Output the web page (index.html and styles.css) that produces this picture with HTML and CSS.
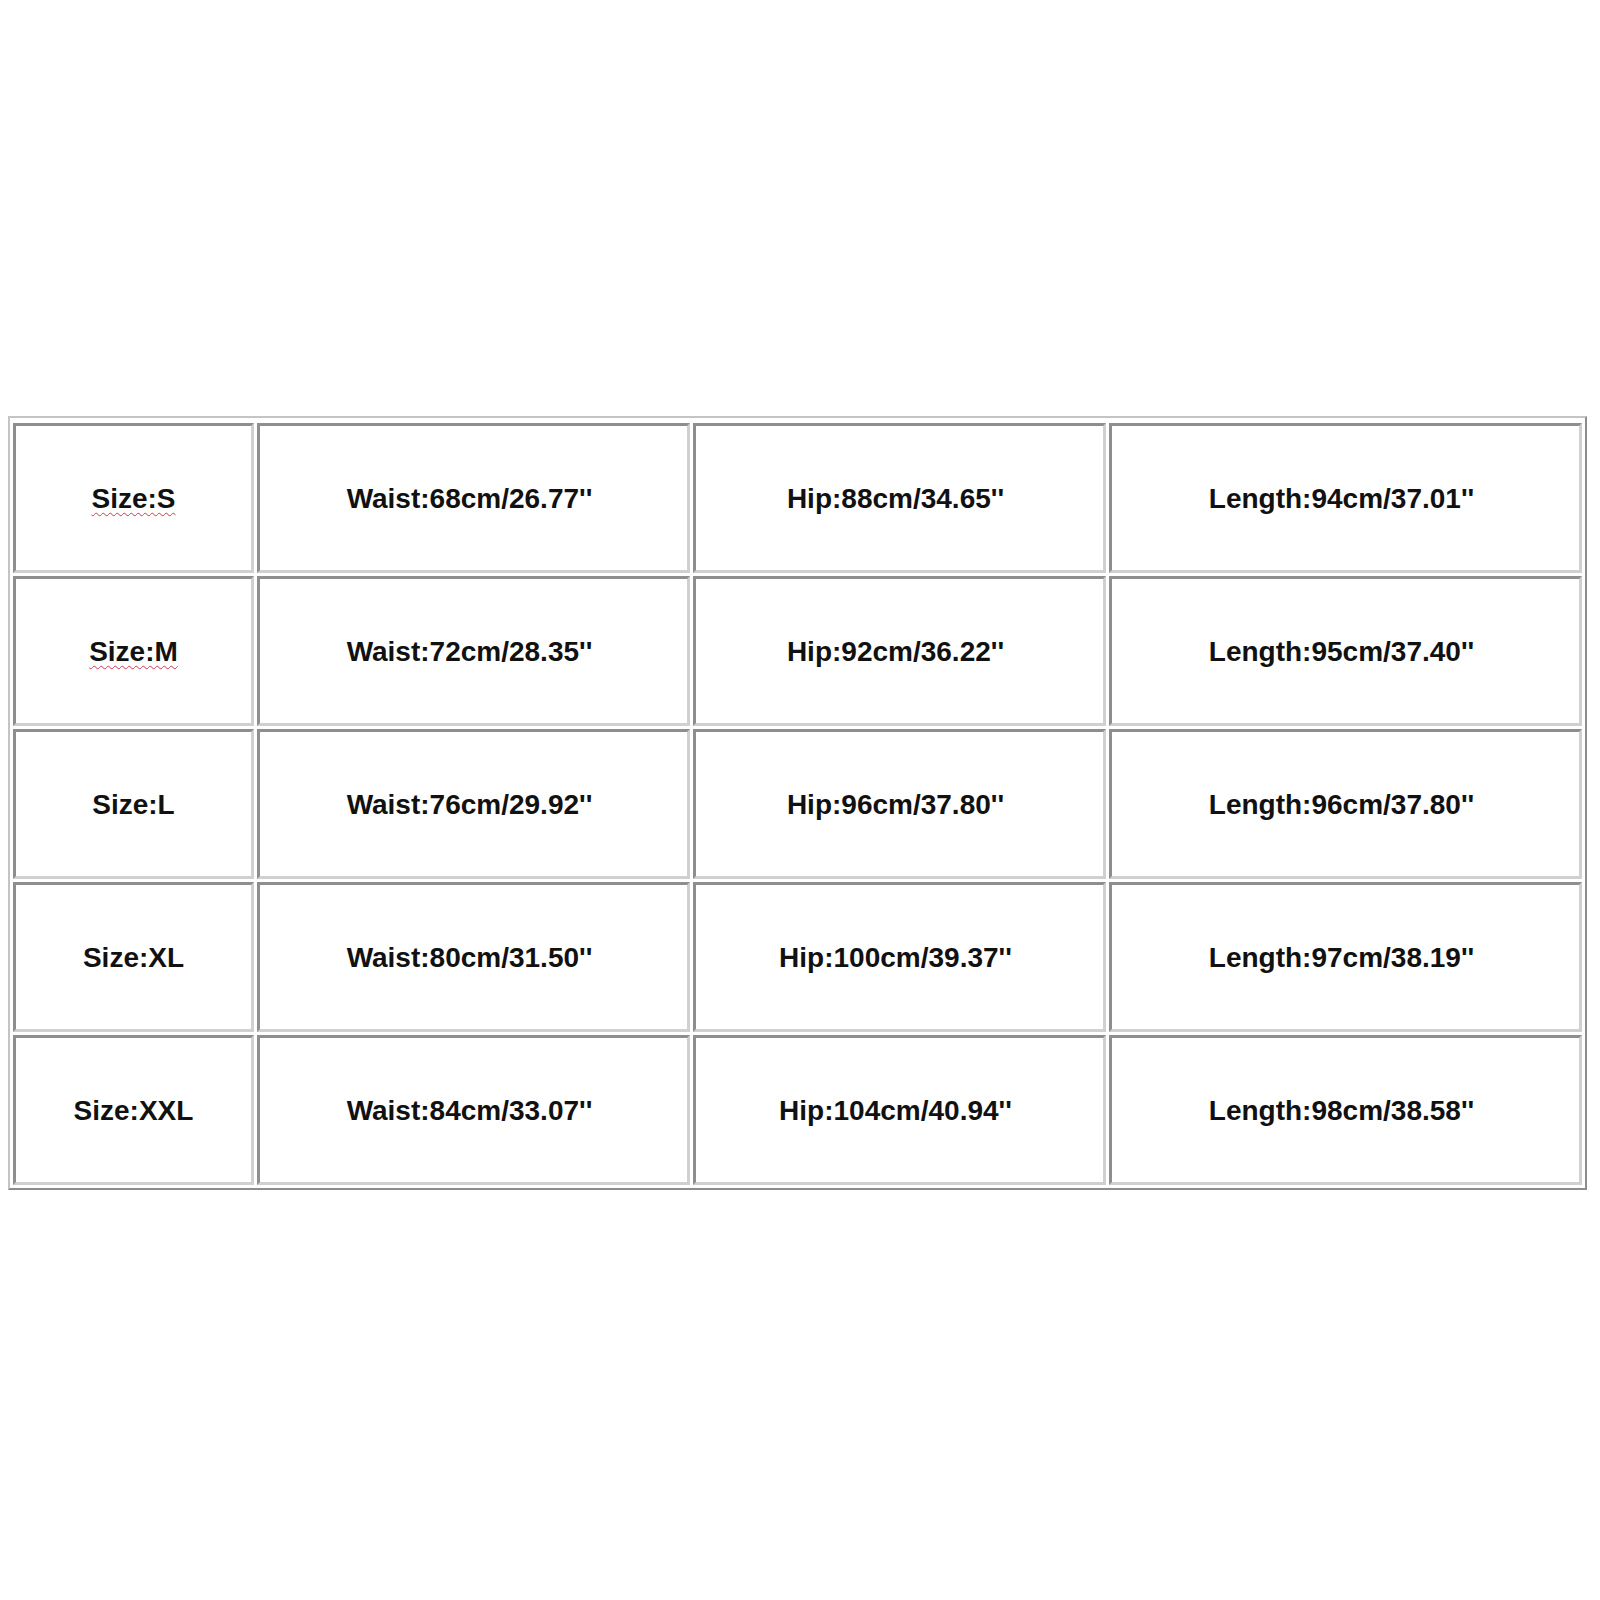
FILE: index.html
```html
<!DOCTYPE html>
<html>
<head>
<meta charset="utf-8">
<link rel="stylesheet" href="styles.css">
</head>
<body>
<div class="page">
  <table class="sizes">
    <colgroup>
      <col class="c1"><col class="c2"><col class="c3"><col class="c4">
    </colgroup>
    <tr>
      <td><span class="spell">Size:S</span></td>
      <td class="val">Waist:68cm/26.77''</td>
      <td class="val">Hip:88cm/34.65''</td>
      <td class="val">Length:94cm/37.01''</td>
    </tr>
    <tr>
      <td><span class="spell">Size:M</span></td>
      <td class="val">Waist:72cm/28.35''</td>
      <td class="val">Hip:92cm/36.22''</td>
      <td class="val">Length:95cm/37.40''</td>
    </tr>
    <tr>
      <td>Size:L</td>
      <td class="val">Waist:76cm/29.92''</td>
      <td class="val">Hip:96cm/37.80''</td>
      <td class="val">Length:96cm/37.80''</td>
    </tr>
    <tr>
      <td>Size:XL</td>
      <td class="val">Waist:80cm/31.50''</td>
      <td class="val">Hip:100cm/39.37''</td>
      <td class="val">Length:97cm/38.19''</td>
    </tr>
    <tr>
      <td>Size:XXL</td>
      <td class="val">Waist:84cm/33.07''</td>
      <td class="val">Hip:104cm/40.94''</td>
      <td class="val">Length:98cm/38.58''</td>
    </tr>
  </table>
</div>
</body>
</html>
```
FILE: styles.css
```css
html, body {
  background: #ffffff;
}
body {
  margin: 0;
  padding: 416px 0 0 8px;
  font-family: "Liberation Sans", Arial, sans-serif;
}
.sizes {
  border-collapse: separate;
  border-spacing: 3px;
  table-layout: fixed;
  width: 1579px;
  padding-top: 2px;
  border-style: solid;
  border-width: 2px;
  border-color: #c4c4c4 #8c8c8c #8c8c8c #c4c4c4;
}
.c1 { width: 241px; }
.c2 { width: 433px; }
.c3 { width: 413px; }
.c4 { width: 473px; }
.sizes td {
  box-sizing: border-box;
  height: 150px;
  padding: 2px 0 0 0;
  text-align: center;
  vertical-align: middle;
  font-weight: bold;
  font-size: 28px;
  color: #111111;
  border-style: solid;
  border-width: 3px;
  border-color: #8e8e8e #d0d0d0 #d0d0d0 #8e8e8e;
}
.sizes td.val {
  padding-right: 8px;
}
.spell {
  text-decoration-line: underline;
  text-decoration-style: wavy;
  text-decoration-color: #c8385a;
  text-decoration-thickness: 1px;
  text-underline-offset: 4px;
}
```
